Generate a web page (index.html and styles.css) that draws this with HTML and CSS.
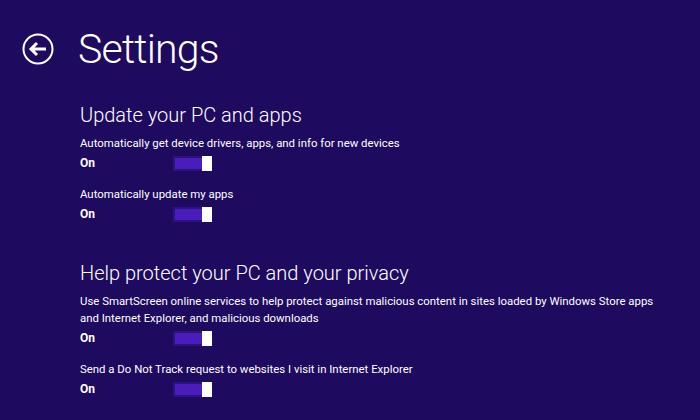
FILE: index.html
```html
<!DOCTYPE html>
<html lang="en">
<head>
<meta charset="utf-8">
<title>Settings</title>
<link rel="stylesheet" href="styles.css">
</head>
<body>
<div class="page">
  <header class="top">
    <svg class="back" width="32" height="32" viewBox="0 0 32 32" aria-hidden="true">
      <circle cx="16" cy="16" r="14.5" fill="none" stroke="#fff" stroke-width="2"/>
      <path d="M9 16 H24 M15 10 L9 16 L15 22" fill="none" stroke="#fff" stroke-width="3" stroke-linecap="butt" stroke-linejoin="miter"/>
    </svg>
    <h1 class="title">Settings</h1>
  </header>

  <section class="section first">
    <h2 class="section-title">Update your PC and apps</h2>
    <div class="item">
      <p class="label">Automatically get device drivers, apps, and info for new devices</p>
      <div class="row"><span class="state">On</span><span class="toggle"><span class="track"></span><span class="thumb"></span></span></div>
    </div>
    <div class="item">
      <p class="label">Automatically update my apps</p>
      <div class="row"><span class="state">On</span><span class="toggle"><span class="track"></span><span class="thumb"></span></span></div>
    </div>
  </section>

  <section class="section second">
    <h2 class="section-title">Help protect your PC and your privacy</h2>
    <div class="item">
      <p class="label">Use SmartScreen online services to help protect against malicious content in sites loaded by Windows Store apps<br>and Internet Explorer, and malicious downloads</p>
      <div class="row"><span class="state">On</span><span class="toggle"><span class="track"></span><span class="thumb"></span></span></div>
    </div>
    <div class="item">
      <p class="label">Send a Do Not Track request to websites I visit in Internet Explorer</p>
      <div class="row"><span class="state">On</span><span class="toggle"><span class="track"></span><span class="thumb"></span></span></div>
    </div>
  </section>
</div>
</body>
</html>
```

FILE: styles.css
```css
html, body {
  margin: 0;
  padding: 0;
  background: #1e0a5e;
}
body {
  width: 700px;
  height: 420px;
  overflow: hidden;
  color: #fff;
  font-family: Roboto, "Open Sans", "Liberation Sans", sans-serif;
}
.page {
  display: flex;
  flex-direction: column;
}
.top {
  display: flex;
  align-items: center;
  gap: 24px;
  padding-left: 22px;
  margin-top: 24px;
  height: 50px;
}
.back {
  display: block;
  flex: none;
}
.title {
  margin: 0;
  font-size: 41px;
  line-height: 50px;
  font-weight: 300;
  letter-spacing: -0.8px;
}
.section {
  padding-left: 80px;
  display: flex;
  flex-direction: column;
}
.section.first {
  margin-top: 27px;
}
.section.second {
  margin-top: 35px;
}
.section-title {
  margin: 0;
  font-size: 20px;
  line-height: 28px;
  font-weight: 300;
}
.item {
  margin-top: 13px;
}
.section-title + .item {
  margin-top: 6px;
}
.label {
  margin: 0;
  font-size: 11.4px;
  line-height: 17px;
  font-weight: 400;
}
.row {
  display: flex;
  align-items: center;
  height: 20px;
  margin-top: 1px;
}
.state {
  width: 93px;
  font-size: 12px;
  font-weight: 700;
}
.toggle {
  display: flex;
  align-items: center;
  width: 39px;
  height: 17px;
}
.track {
  flex: 1;
  height: 11px;
  margin-left: 2px;
  background: #4a1bbd;
  box-shadow: 0 0 0 2px #2a1478;
}
.thumb {
  width: 10px;
  height: 15px;
  background: #fff;
}
```
